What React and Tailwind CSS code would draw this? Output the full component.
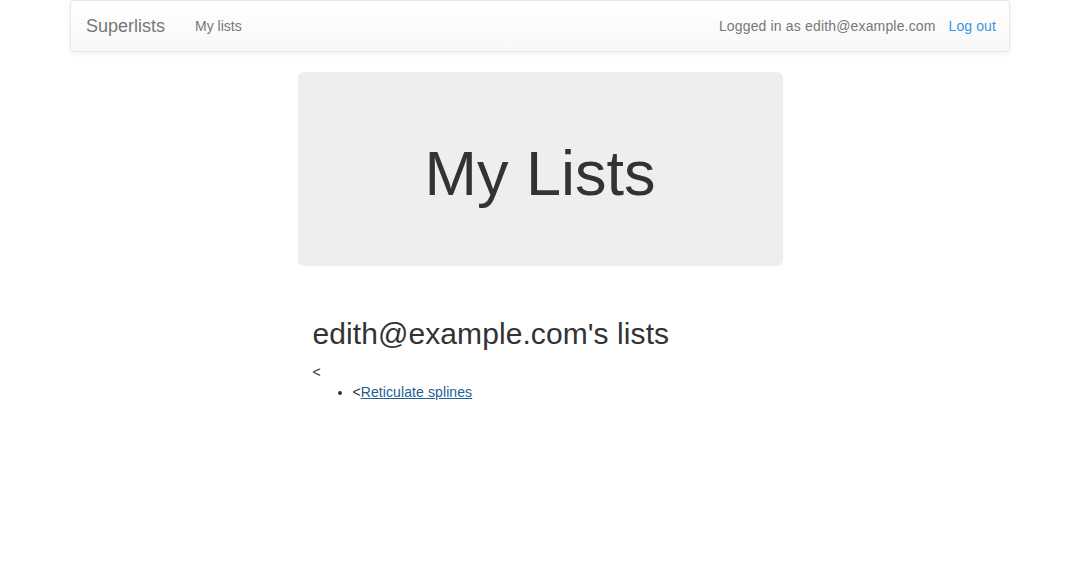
export default function App() {
  return (
    <div className="min-h-[576px] bg-white text-[14px] leading-[20px] text-[#333]" style={{ fontFamily: '"Liberation Sans", Arial, sans-serif' }}>
      <div className="mx-auto w-[970px] px-[15px]">
        <nav className="flex h-[52px] items-stretch justify-between rounded-[4px] border border-[#e7e7e7] bg-gradient-to-b from-white to-[#f8f8f8] shadow-[0_1px_5px_rgba(0,0,0,0.075)]">
          <div className="flex items-center">
            <span className="px-[15px] text-[18px] leading-[20px] text-[#777]">Superlists</span>
            <span className="px-[15px] text-[14px] text-[#777]">My lists</span>
          </div>
          <div className="flex items-center pr-[13px]">
            <span className="mr-[13px] tracking-[0.16px] text-[#777]">Logged in as edith@example.com</span>
            <span className="tracking-[0.1px] text-[#3d95d9]">Log out</span>
          </div>
        </nav>
      </div>
      <div className="mx-auto mt-[20px] w-[970px]">
        <div className="ml-[242.5px] w-[485px]">
          <div className="flex h-[194px] items-center justify-center rounded-[6px] bg-[#eeeeee] pt-[8px]">
            <h1 className="text-[63px] leading-[69px] text-[#333]">My Lists</h1>
          </div>
          <div className="px-[15px] pt-[51px]">
            <h2 className="text-[30px] leading-[33px] tracking-[0.08px] text-[#333]">edith@example.com's lists</h2>
            <div className="mt-[12px]">&lt;</div>
            <ul className="mt-0 list-disc pl-[40px]">
              <li>
                &lt;<a className="tracking-[0.1px] text-[#245e93] underline">Reticulate splines</a>
              </li>
            </ul>
          </div>
        </div>
      </div>
    </div>
  );
}
